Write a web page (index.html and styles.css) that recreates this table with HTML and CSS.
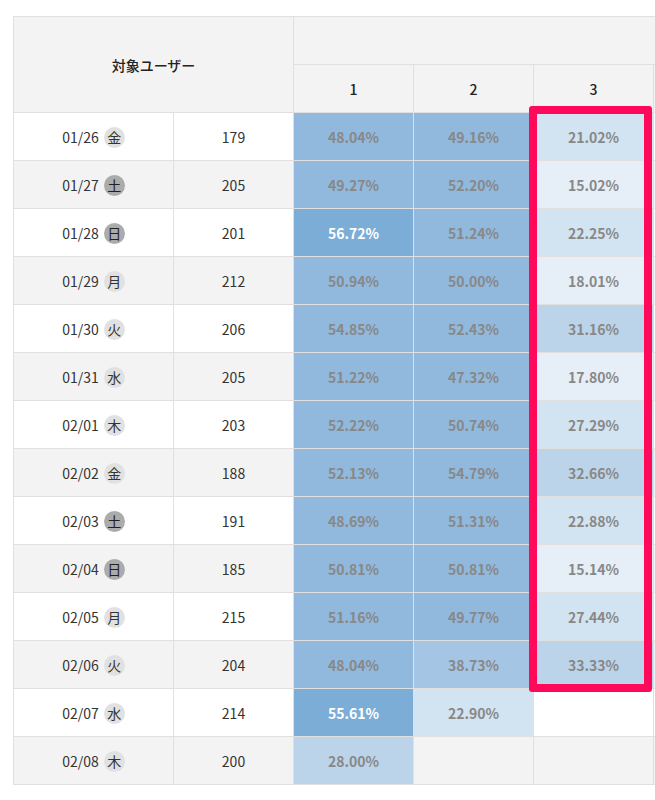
FILE: index.html
```html
<!DOCTYPE html>
<html lang="ja">
<head>
<meta charset="utf-8">
<link rel="stylesheet" href="styles.css">
</head>
<body>
<div class="wrap">
<table class="cohort">
  <colgroup>
    <col class="c-date"><col class="c-num"><col class="c-p"><col class="c-p"><col class="c-p"><col class="c-p">
  </colgroup>
  <thead>
    <tr><th colspan="2" rowspan="2" class="h-user">対象ユーザー</th><th colspan="4" class="h-top"></th></tr>
    <tr><th>1</th><th>2</th><th>3</th><th></th></tr>
  </thead>
  <tbody>
    <tr><td><span class="date">01/26</span><span class="dw">金</span></td><td>179</td><td class="p d">48.04%</td><td class="p d">49.16%</td><td class="p l">21.02%</td><td></td></tr>
    <tr><td><span class="date">01/27</span><span class="dw we">土</span></td><td>205</td><td class="p d">49.27%</td><td class="p d">52.20%</td><td class="p v">15.02%</td><td></td></tr>
    <tr><td><span class="date">01/28</span><span class="dw we">日</span></td><td>201</td><td class="p x">56.72%</td><td class="p d">51.24%</td><td class="p l">22.25%</td><td></td></tr>
    <tr><td><span class="date">01/29</span><span class="dw">月</span></td><td>212</td><td class="p d">50.94%</td><td class="p d">50.00%</td><td class="p v">18.01%</td><td></td></tr>
    <tr><td><span class="date">01/30</span><span class="dw">火</span></td><td>206</td><td class="p d">54.85%</td><td class="p d">52.43%</td><td class="p m">31.16%</td><td></td></tr>
    <tr><td><span class="date">01/31</span><span class="dw">水</span></td><td>205</td><td class="p d">51.22%</td><td class="p d">47.32%</td><td class="p v">17.80%</td><td></td></tr>
    <tr><td><span class="date">02/01</span><span class="dw">木</span></td><td>203</td><td class="p d">52.22%</td><td class="p d">50.74%</td><td class="p l">27.29%</td><td></td></tr>
    <tr><td><span class="date">02/02</span><span class="dw">金</span></td><td>188</td><td class="p d">52.13%</td><td class="p d">54.79%</td><td class="p m">32.66%</td><td></td></tr>
    <tr><td><span class="date">02/03</span><span class="dw we">土</span></td><td>191</td><td class="p d">48.69%</td><td class="p d">51.31%</td><td class="p l">22.88%</td><td></td></tr>
    <tr><td><span class="date">02/04</span><span class="dw we">日</span></td><td>185</td><td class="p d">50.81%</td><td class="p d">50.81%</td><td class="p v">15.14%</td><td></td></tr>
    <tr><td><span class="date">02/05</span><span class="dw">月</span></td><td>215</td><td class="p d">51.16%</td><td class="p d">49.77%</td><td class="p l">27.44%</td><td></td></tr>
    <tr><td><span class="date">02/06</span><span class="dw">火</span></td><td>204</td><td class="p d">48.04%</td><td class="p c">38.73%</td><td class="p m">33.33%</td><td></td></tr>
    <tr><td><span class="date">02/07</span><span class="dw">水</span></td><td>214</td><td class="p x">55.61%</td><td class="p l">22.90%</td><td></td><td></td></tr>
    <tr><td><span class="date">02/08</span><span class="dw">木</span></td><td>200</td><td class="p m">28.00%</td><td></td><td></td><td></td></tr>
  </tbody>
</table>
<div class="highlight"></div>
</div>
</body>
</html>
```

FILE: styles.css
```css
html, body {
  margin: 0;
  padding: 0;
  overflow: hidden;
  background: #fff;
}
body {
  font-family: "Noto Sans CJK JP", "Noto Sans", sans-serif;
  color: #333;
  font-size: 14px;
}
.wrap {
  position: relative;
  padding: 16px 0 0 13px;
  width: 800px;
}
.cohort {
  border-collapse: collapse;
  table-layout: fixed;
  width: 761px;
}
.c-date { width: 160px; }
.c-num { width: 120px; }
.c-p { width: 120px; }
.cohort th, .cohort td {
  border: 1px solid #e0e0e0;
  height: 48px;
  padding: 0;
  text-align: center;
  vertical-align: middle;
  box-sizing: border-box;
}
.cohort th {
  background: #f3f3f3;
  font-weight: 500;
  color: #222;
}
.h-user {
  font-weight: 700;
}
.cohort tbody tr:nth-child(even) {
  background: #f3f3f3;
}
.cohort tbody tr:nth-child(odd) {
  background: #fff;
}
.date {
  display: inline-block;
  vertical-align: middle;
}
.dw {
  display: inline-flex;
  align-items: center;
  justify-content: center;
  width: 21px;
  height: 21px;
  border-radius: 50%;
  background: #e1e1e1;
  margin-left: 5px;
  vertical-align: middle;
  font-size: 14px;
  color: #333;
}
.dw.we {
  background: #ababab;
  color: #222;
}
.p {
  color: #888;
  font-weight: 700;
}
.x { background: #7badd6; color: #fff; }
.d { background: #90b9dd; }
.c { background: #a4c6e4; }
.m { background: #bcd4ea; }
.l { background: #d2e3f1; }
.v { background: #e6eff8; }
.highlight {
  position: absolute;
  left: 529px;
  top: 106px;
  width: 123px;
  height: 586px;
  box-sizing: border-box;
  border: 8px solid #ff0a5b;
  border-radius: 3px;
  pointer-events: none;
}
```
